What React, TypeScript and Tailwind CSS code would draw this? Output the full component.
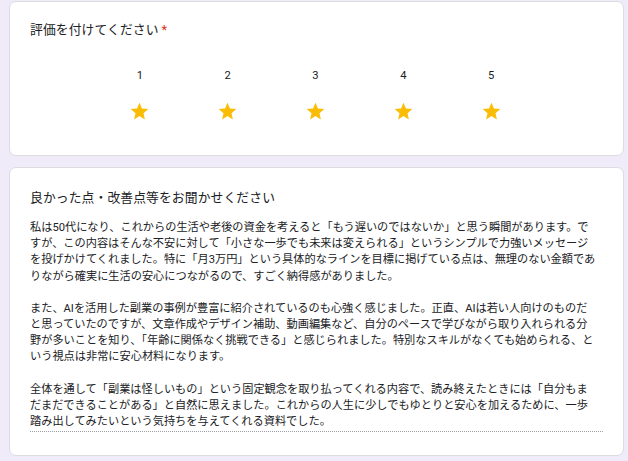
const StarIcon = () => (
  <svg viewBox="0 0 24 24" className="w-[21px] h-[21px]" fill="#fbbc04">
    <path d="M12 17.27L18.18 21l-1.64-7.03L22 9.24l-7.19-.61L12 2 9.19 8.63 2 9.24l5.46 4.73L5.82 21z" />
  </svg>
)

const paragraphs = [
  [
    '私は50代になり、これからの生活や老後の資金を考えると「もう遅いのではないか」と思う瞬間があります。で',
    'すが、この内容はそんな不安に対して「小さな一歩でも未来は変えられる」というシンプルで力強いメッセージ',
    'を投げかけてくれました。特に「月3万円」という具体的なラインを目標に掲げている点は、無理のない金額であ',
    'りながら確実に生活の安心につながるので、すごく納得感がありました。',
  ],
  [
    'また、AIを活用した副業の事例が豊富に紹介されているのも心強く感じました。正直、AIは若い人向けのものだ',
    'と思っていたのですが、文章作成やデザイン補助、動画編集など、自分のペースで学びながら取り入れられる分',
    '野が多いことを知り、「年齢に関係なく挑戦できる」と感じられました。特別なスキルがなくても始められる、と',
    'いう視点は非常に安心材料になります。',
  ],
  [
    '全体を通して「副業は怪しいもの」という固定観念を取り払ってくれる内容で、読み終えたときには「自分もま',
    'だまだできることがある」と自然に思えました。これからの人生に少しでもゆとりと安心を加えるために、一歩',
    '踏み出してみたいという気持ちを与えてくれる資料でした。',
  ],
]

export default function App() {
  return (
    <div
      className="w-[628px] h-[461px] overflow-hidden bg-[#f0ebf8] pl-[9px] pt-[1px] text-[#202124]"
      style={{ fontFamily: 'Roboto, "Noto Sans CJK JP", sans-serif' }}
    >
      {/* Rating question */}
      <div className="w-[615px] h-[155px] bg-white border border-[#dadce0] rounded-[7px] px-[20px] pt-[18px]">
        <div className="text-[12.8px] leading-[19px] tracking-[0.1px]">
          評価を付けてください<span className="text-[#d93025] ml-[3px]">*</span>
        </div>
        <div className="flex justify-center mt-[29px] -ml-[2px]">
          {[1, 2, 3, 4, 5].map((n) => (
            <div key={n} className="w-[87.8px] flex flex-col items-center">
              <span className="text-[11.2px] leading-[16px]">{n}</span>
              <div className="mt-[17px]">
                <StarIcon />
              </div>
            </div>
          ))}
        </div>
      </div>

      {/* Free text answer */}
      <div className="mt-[11px] w-[615px] h-[289px] bg-white border border-[#dadce0] rounded-[7px] px-[20px] pt-[20px]">
        <div className="text-[12.8px] leading-[19px] tracking-[0.1px]">
          良かった点・改善点等をお聞かせください
        </div>
        <div className="mt-[13px] pb-[1px] border-b border-dotted border-[#9aa0a6] text-[11.2px] leading-[16.2px] whitespace-nowrap">
          {paragraphs.map((lines, i) => (
            <div key={i} className={i > 0 ? 'mt-[16px]' : ''}>
              {lines.map((line) => (
                <div key={line}>{line}</div>
              ))}
            </div>
          ))}
        </div>
      </div>
    </div>
  )
}
